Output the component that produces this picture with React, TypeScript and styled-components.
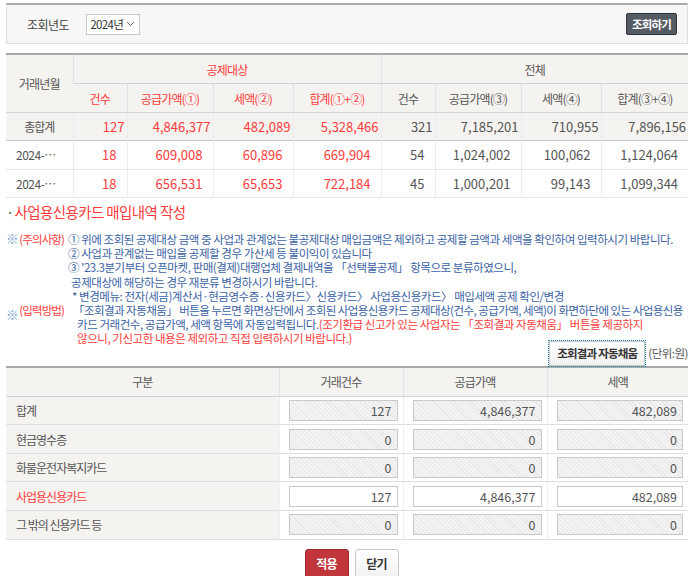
import React from 'react';
import styled, { createGlobalStyle } from 'styled-components';

const GlobalStyle = createGlobalStyle`
  body {
    margin: 0;
    background: #fff;
    font-family: "Noto Sans CJK KR", "Noto Sans", sans-serif;
    color: #555;
  }
`;

const RED = '#ff3b3b';
const BLUE = '#3a62a5';
const HEAD_BG = '#f4f3f0';

const Page = styled.div`
  width: 682px;
  padding: 3px 0 0 6px;
`;

const SearchBar = styled.div`
  display: flex;
  align-items: center;
  height: 41px;
  box-sizing: border-box;
  padding: 0 10px 0 20px;
  background: #f7f7f7;
  border: 1px solid #ddd;
  border-top: 2px solid #a9a9a9;
`;

const SearchLabel = styled.span`
  font-size: 12px;
  letter-spacing: -0.5px;
  color: #444;
  margin-right: 17px;
`;

const SelectBox = styled.div`
  display: flex;
  align-items: center;
  gap: 3px;
  height: 21px;
  box-sizing: border-box;
  padding: 0 4px 0 3px;
  background: #fff;
  border: 1px solid #c9c9c9;
  font-size: 11.5px;
  letter-spacing: -0.6px;
  color: #333;
`;

const DarkButton = styled.button`
  margin-left: auto;
  height: 22px;
  padding: 0 5px;
  background: #555c64;
  border: 1px solid #2e3338;
  border-radius: 2px;
  color: #fff;
  font-family: inherit;
  font-size: 11.5px;
  font-weight: bold;
  letter-spacing: -0.8px;
`;

const Grid = styled.table<{ $mt: number }>`
  width: 682px;
  margin-top: ${p => p.$mt}px;
  border-collapse: collapse;
  table-layout: fixed;
  border-top: 2px solid #a9a9a9;
`;

const Th = styled.th<{ $red?: boolean }>`
  height: 28px;
  padding: 0;
  background: ${HEAD_BG};
  font-weight: normal;
  font-size: 12px;
  letter-spacing: -0.8px;
  color: ${p => (p.$red ? RED : '#555')};
  border-bottom: 1px solid #d4d4d4;
  border-left: 1px solid #e2e2e2;
  &:first-child { border-left: none; }
  white-space: nowrap;
`;

const SumRow = styled.tr`
  height: 28px;
  background: ${HEAD_BG};
  border-bottom: 1px solid #c9c9c9;
`;

const DataRow = styled.tr`
  height: 28.5px;
  border-bottom: 1px solid #e6e6e6;
`;

const LabelCell = styled.td`
  padding: 0 0 0 10px;
  font-size: 12px;
  letter-spacing: -0.5px;
  color: #555;
  white-space: nowrap;
  overflow: hidden;
`;

const SumLabel = styled(LabelCell)`
  text-align: center;
  padding: 0;
  letter-spacing: -1px;
`;

const NumCell = styled.td<{ $red?: boolean; $tight?: boolean }>`
  padding: 0 ${p => (p.$tight ? 2 : 10)}px 0 0;
  text-align: right;
  font-size: 13px;
  color: ${p => (p.$red ? RED : '#555')};
  border-left: 1px solid #ececec;
  white-space: nowrap;
`;

const Title = styled.div`
  margin-top: 4px;
  font-size: 14.5px;
  letter-spacing: -0.6px;
  color: ${RED};
  line-height: 20px;
`;

const Dot = styled.span`
  color: #666;
  margin-right: 1px;
`;

const Notes = styled.div`
  margin-top: 10px;
  font-size: 11.5px;
  letter-spacing: -0.45px;
  line-height: 14.2px;
  color: ${BLUE};
`;

const NoteBlock = styled.div`
  display: flex;
`;

const Mark = styled.div<{ $w: number }>`
  flex: none;
  width: ${p => p.$w}px;
  white-space: nowrap;
  letter-spacing: -0.9px;
`;

const Asterisk = styled.span<{ $drop?: number }>`
  position: relative;
  top: ${p => p.$drop ?? 0}px;
  font-size: 12.5px;
  color: #6b98d4;
`;

const MarkLabel = styled.span`
  color: ${RED};
`;

const NoteLine = styled.div<{ $indent?: number; $red?: boolean; $dense?: boolean }>`
  padding-left: ${p => p.$indent ?? 0}px;
  white-space: nowrap;
  letter-spacing: ${p => (p.$dense ? '-0.55px' : 'inherit')};
  color: ${p => (p.$red ? RED : BLUE)};
`;

const Red = styled.span`
  color: ${RED};
`;

const ToolRow = styled.div`
  display: flex;
  justify-content: flex-end;
  align-items: center;
  margin-top: -5px;
`;

const FillButton = styled.button`
  height: 25px;
  padding: 0 7px;
  background: linear-gradient(#ffffff, #f1f1f1);
  border: 1px solid #c8c8c8;
  outline: 1px dotted #1f86a8;
  outline-offset: 0;
  color: #333;
  font-family: inherit;
  font-size: 11.5px;
  font-weight: bold;
  letter-spacing: -0.8px;
`;

const Unit = styled.span`
  margin-left: 3px;
  font-size: 11.5px;
  letter-spacing: -0.5px;
  color: #555;
`;

const FormRow = styled.tr`
  height: 28.6px;
  border-bottom: 1px solid #dedede;
`;

const FormLabel = styled.td<{ $red?: boolean }>`
  padding: 0 0 0 10px;
  background: ${HEAD_BG};
  font-size: 12px;
  letter-spacing: -1px;
  color: ${p => (p.$red ? RED : '#555')};
`;

const FormCell = styled.td`
  padding: 0 5px 0 9px;
  border-left: 1px solid #eeeeee;
`;

const Field = styled.input<{ $locked?: boolean }>`
  display: block;
  width: 100%;
  height: 21px;
  box-sizing: border-box;
  padding: 0 5px 0 0;
  border: 1px solid #c9c9c9;
  text-align: right;
  font-family: inherit;
  font-size: 12.5px;
  color: #555;
  background: ${p =>
    p.$locked
      ? 'repeating-linear-gradient(45deg, #f4f4f4 0px, #f4f4f4 2px, #e7e7e7 2px, #e7e7e7 3px)'
      : '#fff'};
`;

const Actions = styled.div`
  display: flex;
  justify-content: center;
  gap: 6px;
  margin-top: 9px;
  padding-left: 9px;
`;

const ActionButton = styled.button<{ $primary?: boolean }>`
  width: 44px;
  height: 29px;
  border-radius: 3px;
  font-family: inherit;
  font-size: 12px;
  font-weight: bold;
  letter-spacing: -0.8px;
  border: 1px solid ${p => (p.$primary ? '#9e2a2e' : '#c8c8c8')};
  background: ${p => (p.$primary ? '#c1363b' : 'linear-gradient(#fff, #f2f2f2)')};
  color: ${p => (p.$primary ? '#fff' : '#333')};
`;

const Chevron = () => (
  <svg width="9" height="6" viewBox="0 0 9 6">
    <path d="M1 1l3.5 3.5L8 1" fill="none" stroke="#666" strokeWidth="1" />
  </svg>
);

const monthly = [
  { ym: '2024-…', a: ['18', '609,008', '60,896', '669,904'], b: ['54', '1,024,002', '100,062', '1,124,064'] },
  { ym: '2024-…', a: ['18', '656,531', '65,653', '722,184'], b: ['45', '1,000,201', '99,143', '1,099,344'] },
];

const forms = [
  { label: '합계', v: ['127', '4,846,377', '482,089'], locked: true },
  { label: '현금영수증', v: ['0', '0', '0'], locked: true },
  { label: '화물운전자복지카드', v: ['0', '0', '0'], locked: true },
  { label: '사업용신용카드', v: ['127', '4,846,377', '482,089'], locked: false, red: true },
  { label: '그 밖의 신용카드 등', v: ['0', '0', '0'], locked: true },
];

export default function App() {
  return (
    <Page>
      <GlobalStyle />
      <SearchBar>
        <SearchLabel>조회년도</SearchLabel>
        <SelectBox>
          2024년 <Chevron />
        </SelectBox>
        <DarkButton>조회하기</DarkButton>
      </SearchBar>

      <Grid $mt={9}>
        <colgroup>
          <col style={{ width: 67 }} />
          <col style={{ width: 54 }} />
          <col style={{ width: 86 }} />
          <col style={{ width: 80 }} />
          <col style={{ width: 88 }} />
          <col style={{ width: 54 }} />
          <col style={{ width: 86 }} />
          <col style={{ width: 80 }} />
          <col style={{ width: 87 }} />
        </colgroup>
        <thead>
          <tr>
            <Th rowSpan={2}>거래년월</Th>
            <Th colSpan={4} $red>공제대상</Th>
            <Th colSpan={4}>전체</Th>
          </tr>
          <tr>
            <Th $red>건수</Th>
            <Th $red>공급가액(①)</Th>
            <Th $red>세액(②)</Th>
            <Th $red>합계(①+②)</Th>
            <Th>건수</Th>
            <Th>공급가액(③)</Th>
            <Th>세액(④)</Th>
            <Th>합계(③+④)</Th>
          </tr>
        </thead>
        <tbody>
          <SumRow>
            <SumLabel>총합계</SumLabel>
            <NumCell $red $tight>127</NumCell>
            <NumCell $red $tight>4,846,377</NumCell>
            <NumCell $red $tight>482,089</NumCell>
            <NumCell $red $tight>5,328,466</NumCell>
            <NumCell $tight>321</NumCell>
            <NumCell $tight>7,185,201</NumCell>
            <NumCell $tight>710,955</NumCell>
            <NumCell $tight>7,896,156</NumCell>
          </SumRow>
          {monthly.map((m, i) => (
            <DataRow key={i}>
              <LabelCell>{m.ym}</LabelCell>
              {m.a.map((v, j) => (
                <NumCell key={'a' + j} $red>{v}</NumCell>
              ))}
              {m.b.map((v, j) => (
                <NumCell key={'b' + j}>{v}</NumCell>
              ))}
            </DataRow>
          ))}
        </tbody>
      </Grid>

      <Title>
        <Dot>·</Dot>사업용신용카드 매입내역 작성
      </Title>

      <Notes>
        <NoteBlock>
          <Mark $w={62}>
            <Asterisk>※</Asterisk> <MarkLabel>(주의사항)</MarkLabel>
          </Mark>
          <div>
            <NoteLine>① 위에 조회된 공제대상 금액 중 사업과 관계없는 불공제대상 매입금액은 제외하고 공제할 금액과 세액을 확인하여 입력하시기 바랍니다.</NoteLine>
            <NoteLine>② 사업과 관계없는 매입을 공제할 경우 가산세 등 불이익이 있습니다</NoteLine>
            <NoteLine>③ '23.3분기부터 오픈마켓, 판매(결제)대행업체 결제내역을 「선택불공제」 항목으로 분류하였으니,</NoteLine>
            <NoteLine $indent={3}>공제대상에 해당하는 경우 재분류 변경하시기 바랍니다.</NoteLine>
            <NoteLine $indent={4}>* 변경메뉴: 전자(세금)계산서·현금영수증·신용카드〉신용카드〉 사업용신용카드〉 매입세액 공제 확인/변경</NoteLine>
          </div>
        </NoteBlock>
        <NoteBlock>
          <Mark $w={67}>
            <Asterisk $drop={5}>※</Asterisk> <MarkLabel>(입력방법)</MarkLabel>
          </Mark>
          <div>
            <NoteLine $dense>「조회결과 자동채움」 버튼을 누르면 화면상단에서 조회된 사업용신용카드 공제대상(건수, 공급가액, 세액)이 화면하단에 있는 사업용신용</NoteLine>
            <NoteLine $indent={4}>카드 거래건수, 공급가액, 세액 항목에 자동입력됩니다.<Red>(조기환급 신고가 있는 사업자는 「조회결과 자동채움」 버튼을 제공하지</Red></NoteLine>
            <NoteLine $indent={4} $red>않으니, 기신고한 내용은 제외하고 직접 입력하시기 바랍니다.)</NoteLine>
          </div>
        </NoteBlock>
      </Notes>

      <ToolRow>
        <FillButton>조회결과 자동채움</FillButton>
        <Unit>(단위:원)</Unit>
      </ToolRow>

      <Grid $mt={0}>
        <colgroup>
          <col style={{ width: 273 }} />
          <col style={{ width: 124 }} />
          <col style={{ width: 144 }} />
          <col style={{ width: 141 }} />
        </colgroup>
        <thead>
          <tr>
            <Th>구분</Th>
            <Th>거래건수</Th>
            <Th>공급가액</Th>
            <Th>세액</Th>
          </tr>
        </thead>
        <tbody>
          {forms.map(f => (
            <FormRow key={f.label}>
              <FormLabel $red={f.red}>{f.label}</FormLabel>
              {f.v.map((v, j) => (
                <FormCell key={j}>
                  <Field $locked={f.locked} readOnly={f.locked} defaultValue={v} />
                </FormCell>
              ))}
            </FormRow>
          ))}
        </tbody>
      </Grid>

      <Actions>
        <ActionButton $primary>적용</ActionButton>
        <ActionButton>닫기</ActionButton>
      </Actions>
    </Page>
  );
}
